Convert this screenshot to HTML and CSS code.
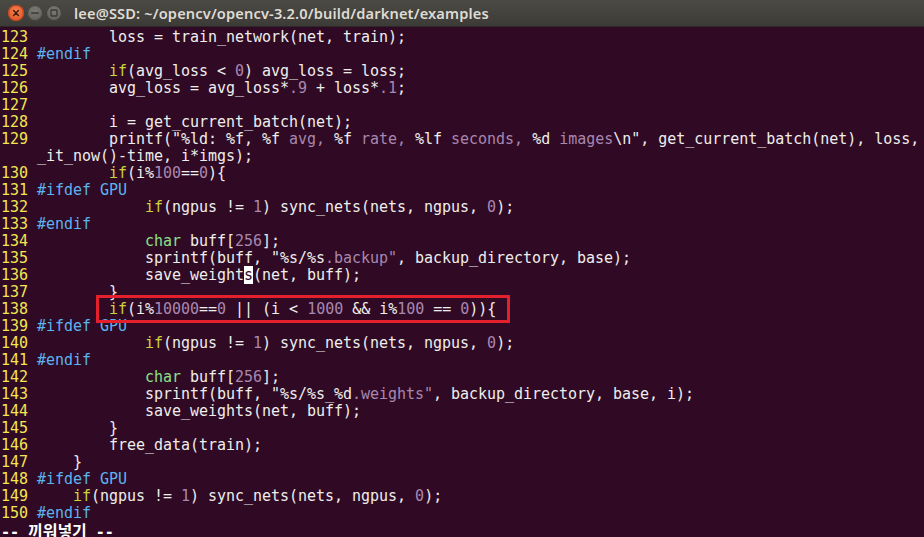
FILE: index.html
```html
<!DOCTYPE html>
<html lang="ko">
<head>
<meta charset="utf-8">
<title>lee@SSD: ~/opencv/opencv-3.2.0/build/darknet/examples</title>
<link rel="stylesheet" href="styles.css">
</head>
<body>
<div class="window">
  <header class="titlebar">
    <div class="controls">
      <span class="btn close"><svg viewBox="0 0 16 16" width="16" height="16"><path d="M5.6 5.6 L10.4 10.4 M10.4 5.6 L5.6 10.4" stroke="#3b1d12" stroke-width="1.4" stroke-linecap="round"/></svg></span>
      <span class="btn"><svg viewBox="0 0 16 16" width="16" height="16"><path d="M4.8 8 H11.2" stroke="#3a3935" stroke-width="1.6" stroke-linecap="round"/></svg></span>
      <span class="btn"><svg viewBox="0 0 16 16" width="16" height="16"><rect x="5" y="5" width="6" height="6" rx="0.8" fill="none" stroke="#3a3935" stroke-width="1.3"/></svg></span>
    </div>
    <div class="title">lee@SSD: ~/opencv/opencv-3.2.0/build/darknet/examples</div>
  </header>
  <main class="term">
<pre class="code"><span class="ln">123 </span>        loss = train_network(net, train);
<span class="ln">124 </span><span class="pp">#endif</span>
<span class="ln">125 </span>        <span class="kw">if</span>(avg_loss &lt; <span class="n">0</span>) avg_loss = loss;
<span class="ln">126 </span>        avg_loss = avg_loss*<span class="n">.9</span> + loss*<span class="n">.1</span>;
<span class="ln">127 </span>
<span class="ln">128 </span>        i = get_current_batch(net);
<span class="ln">129 </span>        printf(<span class="fmt">"%ld: %f, %f</span><span class="n"> avg, </span><span class="fmt">%f</span><span class="n"> rate, </span><span class="fmt">%lf</span><span class="n"> seconds, </span><span class="fmt">%d</span><span class="n"> images</span><span class="fmt">\n</span><span class="fmt">"</span>, get_current_batch(net), loss,
    _it_now()-time, i*imgs);
<span class="ln">130 </span>        <span class="kw">if</span>(i%<span class="n">100</span>==<span class="n">0</span>){
<span class="ln">131 </span><span class="pp">#ifdef GPU</span>
<span class="ln">132 </span>            <span class="kw">if</span>(ngpus != <span class="n">1</span>) sync_nets(nets, ngpus, <span class="n">0</span>);
<span class="ln">133 </span><span class="pp">#endif</span>
<span class="ln">134 </span>            <span class="ty">char</span> buff[<span class="n">256</span>];
<span class="ln">135 </span>            sprintf(buff, <span class="fmt">"%s/%s</span><span class="n">.backup"</span>, backup_directory, base);
<span class="ln">136 </span>            save_weight<span class="cursor">s</span>(net, buff);
<span class="ln">137 </span>        }
<span class="ln">138 </span>        <span class="kw">if</span>(i%<span class="n">10000</span>==<span class="n">0</span> || (i &lt; <span class="n">1000</span> &amp;&amp; i%<span class="n">100</span> == <span class="n">0</span>)){
<span class="ln">139 </span><span class="pp">#ifdef GPU</span>
<span class="ln">140 </span>            <span class="kw">if</span>(ngpus != <span class="n">1</span>) sync_nets(nets, ngpus, <span class="n">0</span>);
<span class="ln">141 </span><span class="pp">#endif</span>
<span class="ln">142 </span>            <span class="ty">char</span> buff[<span class="n">256</span>];
<span class="ln">143 </span>            sprintf(buff, <span class="fmt">"%s/%s_%d</span><span class="n">.weights"</span>, backup_directory, base, i);
<span class="ln">144 </span>            save_weights(net, buff);
<span class="ln">145 </span>        }
<span class="ln">146 </span>        free_data(train);
<span class="ln">147 </span>    }
<span class="ln">148 </span><span class="pp">#ifdef GPU</span>
<span class="ln">149 </span>    <span class="kw">if</span>(ngpus != <span class="n">1</span>) sync_nets(nets, ngpus, <span class="n">0</span>);
<span class="ln">150 </span><span class="pp">#endif</span>
<span class="mode">-- <span class="ko">끼워넣기</span> --</span></pre>
    <div class="highlight-box"></div>
  </main>
</div>
</body>
</html>
```
FILE: styles.css
```css
html, body {
  margin: 0;
  padding: 0;
  background: #300a24;
  overflow: hidden;
}

.window {
  width: 924px;
  height: 537px;
  display: flex;
  flex-direction: column;
  overflow: hidden;
}

.titlebar {
  height: 27px;
  flex: 0 0 27px;
  display: flex;
  align-items: center;
  background: linear-gradient(#4b4a45, #3c3b37);
  border-bottom: 1px solid #2a2926;
  box-sizing: border-box;
  padding-left: 8px;
}

.controls {
  display: flex;
  gap: 3px;
  align-items: center;
}

.btn {
  width: 16px;
  height: 16px;
  border-radius: 50%;
  background: radial-gradient(circle at 50% 35%, #7a7974, #5b5a56);
  box-shadow: inset 0 0 0 1px #3e3d39;
  display: flex;
}

.btn.close {
  background: radial-gradient(circle at 50% 35%, #f57d4f, #e0501f);
  box-shadow: inset 0 0 0 1px #b8441e;
}

.title {
  margin-left: 12px;
  color: #dfdbd2;
  font-family: "Noto Sans", "Open Sans", sans-serif;
  font-weight: 600;
  font-size: 14.6px;
  letter-spacing: 0.15px;
  white-space: nowrap;
}

.term {
  position: relative;
  flex: 1;
  padding-top: 2px;
}

.code {
  margin: 0;
  font-family: "DejaVu Sans Mono", "Liberation Mono", monospace;
  font-size: 15px;
  letter-spacing: -0.03px;
  line-height: 17px;
  color: #eeeeec;
  white-space: pre;
  overflow: hidden;
  padding-left: 1px;
}

.ln { color: #f3e64e; }
.pp { color: #5ab4ef; }
.kw { color: #cdd43a; }
.ty { color: #8ae08a; }
.n { color: #a887b0; }
.fmt { color: #eeeeec; }

.cursor {
  background: #ffffff;
  color: #300a24;
}

.mode {
  font-weight: bold;
  color: #ffffff;
}

.ko {
  font-family: "Noto Sans CJK KR", sans-serif;
  font-size: 16px;
  font-weight: bold;
}

.highlight-box {
  position: absolute;
  left: 96px;
  top: 268px;
  width: 408px;
  height: 22px;
  border: 3px solid #e3202b;
}
```
